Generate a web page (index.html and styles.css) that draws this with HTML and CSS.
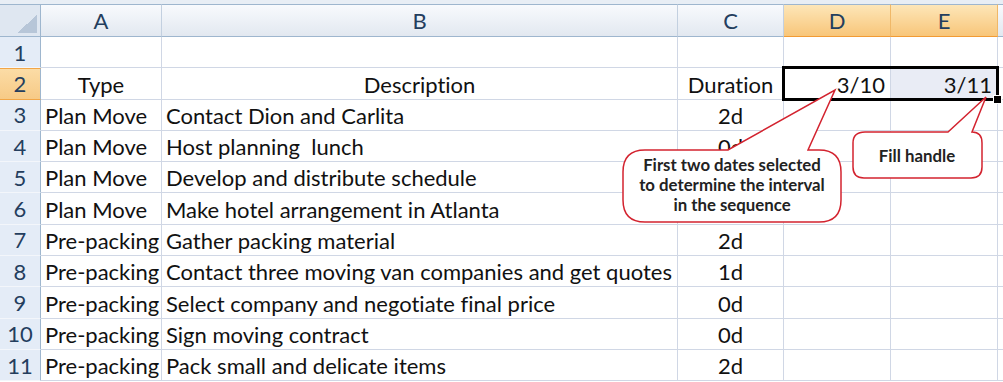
FILE: index.html
```html
<!DOCTYPE html>
<html lang="en">
  <head>
    <meta charset="UTF-8" />
    <title>Moving Plan - Sheet1</title>
    <link rel="stylesheet" href="styles.css">
  </head>
  <body>
    <div class="topbar"></div>

    <div class="sheet">
      <!-- column headers -->
      <div class="corner"><span class="corner-mark"></span></div>
      <div class="ch">A</div>
      <div class="ch">B</div>
      <div class="ch">C</div>
      <div class="ch sel">D</div>
      <div class="ch sel">E</div>
      <div class="ch last"></div>

      <div class="rh">1</div>
      <div class="c"></div><div class="c"></div><div class="c"></div><div class="c"></div><div class="c"></div><div class="c last"></div>

      <div class="rh sel">2</div>
      <div class="c ctr">Type</div>
      <div class="c ctr">Description</div>
      <div class="c ctr">Duration</div>
      <div class="c right">3/10</div>
      <div class="c right in-range">3/11</div>
      <div class="c last"></div>

      <div class="rh">3</div>
      <div class="c">Plan Move</div>
      <div class="c">Contact Dion and Carlita</div>
      <div class="c ctr">2d</div>
      <div class="c"></div><div class="c"></div><div class="c last"></div>

      <div class="rh">4</div>
      <div class="c">Plan Move</div>
      <div class="c">Host planning&nbsp; lunch</div>
      <div class="c ctr">0d</div>
      <div class="c"></div><div class="c"></div><div class="c last"></div>

      <div class="rh">5</div>
      <div class="c">Plan Move</div>
      <div class="c">Develop and distribute schedule</div>
      <div class="c ctr"></div>
      <div class="c"></div><div class="c"></div><div class="c last"></div>

      <div class="rh">6</div>
      <div class="c">Plan Move</div>
      <div class="c">Make hotel arrangement in Atlanta</div>
      <div class="c ctr"></div>
      <div class="c"></div><div class="c"></div><div class="c last"></div>

      <div class="rh">7</div>
      <div class="c">Pre-packing</div>
      <div class="c">Gather packing material</div>
      <div class="c ctr">2d</div>
      <div class="c"></div><div class="c"></div><div class="c last"></div>

      <div class="rh">8</div>
      <div class="c">Pre-packing</div>
      <div class="c">Contact three moving van companies and get quotes</div>
      <div class="c ctr">1d</div>
      <div class="c"></div><div class="c"></div><div class="c last"></div>

      <div class="rh">9</div>
      <div class="c">Pre-packing</div>
      <div class="c">Select company and negotiate final price</div>
      <div class="c ctr">0d</div>
      <div class="c"></div><div class="c"></div><div class="c last"></div>

      <div class="rh">10</div>
      <div class="c">Pre-packing</div>
      <div class="c">Sign moving contract</div>
      <div class="c ctr">0d</div>
      <div class="c"></div><div class="c"></div><div class="c last"></div>

      <div class="rh">11</div>
      <div class="c">Pre-packing</div>
      <div class="c">Pack small and delicate items</div>
      <div class="c ctr">2d</div>
      <div class="c"></div><div class="c"></div><div class="c last"></div>
    </div>

    <!-- selected range D2:E2 with its fill handle -->
    <div class="selection"><span class="fill-handle"></span></div>

    <!-- speech bubbles -->
    <svg class="callouts" width="1003" height="382" viewBox="0 0 1003 382">
      <path class="bubble" d="M645 150 L728 150 L835 90 L808 150 L819 150 Q841 150 841 172 L841 200 Q841 222 819 222 L645 222 Q623 222 623 200 L623 172 Q623 150 645 150 Z" />
      <text class="bubble-text" x="732" y="171">First two dates selected</text>
      <text class="bubble-text" x="732" y="191">to determine the interval</text>
      <text class="bubble-text" x="732" y="211">in the sequence</text>

      <path class="bubble" d="M865 132 L948 132 L986 97 L972 132 Q982 132 982 143 L982 167 Q982 178 971 178 L864 178 Q853 178 853 167 L853 143 Q853 132 865 132 Z" />
      <text class="bubble-text" x="917" y="162">Fill handle</text>
    </svg>
  </body>
</html>
```
FILE: styles.css
```css
body {
  margin: 0;
  width: 1003px;
  height: 382px;
  overflow: hidden;
  position: relative;
  background: #fff;
  font-family: Lato, "Liberation Sans", sans-serif;
  font-variant-ligatures: none;
  color: #111;
}

.topbar {
  height: 4px;
  background: #e8eef5;
}

.sheet {
  display: grid;
  grid-template-columns: 41px 121px 516px 106px 107px 107px 1fr;
  grid-template-rows: 33px repeat(11, 31.3px);
  font-size: 22px;
}

.sheet > div {
  box-sizing: border-box;
  border-right: 1px solid #d0d7e5;
  border-bottom: 1px solid #d0d7e5;
  white-space: nowrap;
  overflow: hidden;
}

/* header row */
.corner,
.ch {
  border-top: 1px solid #9eb6ce;
  background: linear-gradient(#f8fafd, #e2e8f0);
  border-bottom-color: #9eb6ce !important;
}

.corner {
  display: flex;
  align-items: flex-end;
  justify-content: flex-end;
  padding: 0 3px 3px 0;
  background: #dfe7f1;
  border-right-color: #9eb6ce !important;
}

.corner-mark {
  width: 20px;
  height: 18px;
  background: linear-gradient(to bottom right, transparent 50%, #b7c6d8 50%);
}

.ch {
  display: flex;
  align-items: center;
  justify-content: center;
  color: #243e5e;
  border-right-color: #c3d0e0 !important;
}

.ch.sel {
  background: linear-gradient(#fde6b8, #f8c67a);
  border-bottom-color: #f29b34 !important;
  border-right-color: #f0b868 !important;
}

/* row numbers */
.rh {
  display: flex;
  align-items: center;
  justify-content: center;
  background: #e4ecf7;
  color: #243e5e;
  border-right-color: #9eb6ce !important;
  border-bottom-color: #f3f6fb !important;
}

.rh.sel {
  background: linear-gradient(#fbdca6, #f7ca86);
  border-top: 1px solid #f2a647;
  border-bottom-color: #f2a647 !important;
}

/* data cells */
.c {
  display: flex;
  align-items: flex-end;
  padding: 0 4px 2px;
  line-height: 25px;
}

.c.ctr {
  justify-content: center;
}

.c.right {
  justify-content: flex-end;
  padding-right: 5px;
}

.c.in-range {
  background: #e9ecf5;
}

.c.last,
.ch.last {
  border-right: none !important;
}

/* selection overlay */
.selection {
  position: absolute;
  left: 782px;
  top: 66px;
  width: 217px;
  height: 35px;
  box-sizing: border-box;
  border: 3px solid #000;
}

.fill-handle {
  position: absolute;
  right: -6px;
  bottom: -6px;
  width: 7px;
  height: 7px;
  background: #000;
  border: 1px solid #fff;
}

.callouts {
  position: absolute;
  left: 0;
  top: 0;
  pointer-events: none;
}

.bubble {
  fill: #fff;
  stroke: #d3232f;
  stroke-width: 1.5;
}

.bubble-text {
  font-family: Lato, "Liberation Sans", sans-serif;
  font-weight: 700;
  font-size: 16.8px;
  fill: #222;
  text-anchor: middle;
}
```
